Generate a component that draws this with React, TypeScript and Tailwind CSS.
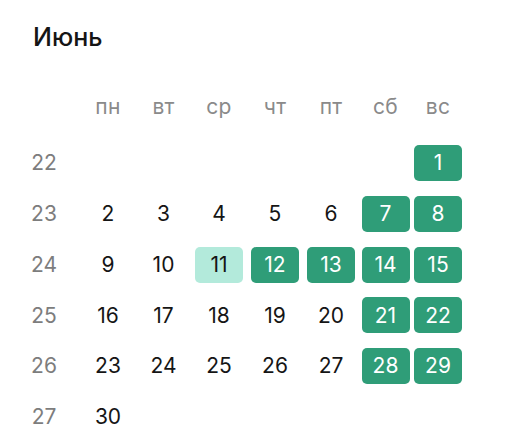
import React from "react";

type Day = { n: number; kind?: "green" | "mint" } | null;

const weeks: { wk: number; days: Day[] }[] = [
  { wk: 22, days: [null, null, null, null, null, null, { n: 1, kind: "green" }] },
  { wk: 23, days: [{ n: 2 }, { n: 3 }, { n: 4 }, { n: 5 }, { n: 6 }, { n: 7, kind: "green" }, { n: 8, kind: "green" }] },
  { wk: 24, days: [{ n: 9 }, { n: 10 }, { n: 11, kind: "mint" }, { n: 12, kind: "green" }, { n: 13, kind: "green" }, { n: 14, kind: "green" }, { n: 15, kind: "green" }] },
  { wk: 25, days: [{ n: 16 }, { n: 17 }, { n: 18 }, { n: 19 }, { n: 20 }, { n: 21, kind: "green" }, { n: 22, kind: "green" }] },
  { wk: 26, days: [{ n: 23 }, { n: 24 }, { n: 25 }, { n: 26 }, { n: 27 }, { n: 28, kind: "green" }, { n: 29, kind: "green" }] },
  { wk: 27, days: [{ n: 30 }, null, null, null, null, null, null] },
];

const heads = ["пн", "вт", "ср", "чт", "пт", "сб", "вс"];

const cols = "grid grid-cols-[60px_56px_55px_56px_56px_56px_53px_52px]";

export default function App() {
  return (
    <div
      className="w-[514px] h-[442px] bg-white overflow-hidden"
      style={{ fontFamily: "Inter, 'Noto Sans', sans-serif" }}
    >
      <div className="pt-[21px] pl-[33px] text-[25px] leading-[32px] font-medium text-[#151515]">
        Июнь
      </div>
      <div className="pl-[20px] pt-[36px]">
        <div className={`${cols} h-[36px] items-center text-[21px] text-[#8a8a8a] tracking-[0.3px]`}>
          <div />
          {heads.map((h) => (
            <div key={h} className="flex justify-center">
              {h}
            </div>
          ))}
        </div>
        <div className={`${cols} auto-rows-[36px] gap-y-[14.75px] mt-[20px]`}>
          {weeks.map((w) => (
            <React.Fragment key={w.wk}>
              <div className="flex items-center justify-center pr-[12px] text-[21px] text-[#7d7d7d]">
                {w.wk}
              </div>
              {w.days.map((d, i) => (
                <div key={i} className="flex items-center justify-center">
                  {d && (
                    <div
                      className={
                        "w-[48px] h-[36px] rounded-[5px] flex items-center justify-center text-[21px] " +
                        (d.kind === "green"
                          ? "bg-[#2f9d78] text-white"
                          : d.kind === "mint"
                          ? "bg-[#b3eadb] text-[#151515]"
                          : "text-[#151515]")
                      }
                    >
                      {d.n}
                    </div>
                  )}
                </div>
              ))}
            </React.Fragment>
          ))}
        </div>
      </div>
    </div>
  );
}
